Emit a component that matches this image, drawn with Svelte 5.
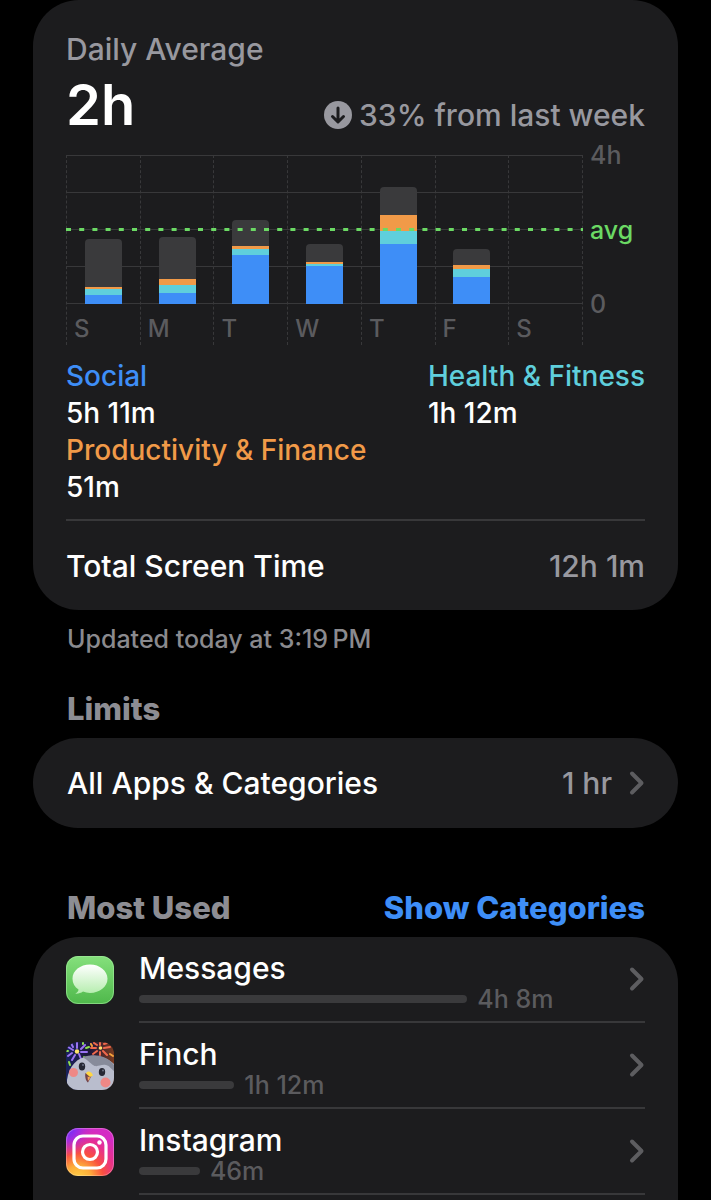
<script>
  const SCALE_MINUTES = 240;
  const AVERAGE_MINUTES = 120;

  const days = [
    { label: 'S', social: 14, health: 10, finance: 4, other: 76 },
    { label: 'M', social: 17, health: 14, finance: 9, other: 68 },
    { label: 'T', social: 79, health: 10, finance: 4, other: 42 },
    { label: 'W', social: 61, health: 4, finance: 2, other: 30 },
    { label: 'T', social: 97, health: 21, finance: 25, other: 46 },
    { label: 'F', social: 43, health: 13, finance: 7, other: 25 },
    { label: 'S', social: 0, health: 0, finance: 0, other: 0 }
  ];
  const stack = ['other', 'finance', 'health', 'social'];

  const categories = [
    { key: 'social', name: 'Social', time: '5h 11m' },
    { key: 'health', name: 'Health & Fitness', time: '1h 12m' },
    { key: 'finance', name: 'Productivity & Finance', time: '51m' }
  ];

  const apps = [
    { id: 'messages', name: 'Messages', minutes: 248, time: '4h 8m' },
    { id: 'finch', name: 'Finch', minutes: 72, time: '1h 12m' },
    { id: 'instagram', name: 'Instagram', minutes: 46, time: '46m' }
  ];
  const longest = Math.max(...apps.map((app) => app.minutes));

  const percent = (minutes) => (minutes / SCALE_MINUTES) * 100;
</script>

{#snippet chevron()}
  <svg class="chevron" viewBox="0 0 16 26" aria-hidden="true">
    <path d="M3 3.5 L12.5 13 L3 22.5" />
  </svg>
{/snippet}

{#snippet appIcon(id)}
  <svg class="app-icon" viewBox="0 0 48 48" aria-hidden="true">
    {#if id === 'messages'}
      <defs>
        <linearGradient id="msg-bg" x1="0" y1="0" x2="0" y2="1">
          <stop offset="0" stop-color="#85e07c" />
          <stop offset="1" stop-color="#4fb84b" />
        </linearGradient>
        <linearGradient id="msg-bubble" x1="0" y1="0" x2="0" y2="1">
          <stop offset="0" stop-color="#ffffff" />
          <stop offset="1" stop-color="#b5edae" />
        </linearGradient>
      </defs>
      <rect width="48" height="48" rx="12" fill="url(#msg-bg)" />
      <rect x="0.5" y="0.5" width="47" height="47" rx="11.5" fill="none" stroke="#a5eba0" stroke-opacity="0.6" />
      <path
        d="M24 8.5c-9.8 0-17.5 6.2-17.5 14.2 0 4.6 2.3 8.3 6 10.9 0 1.7-1.2 3.1-3.2 4.1 3 .2 5.7-.6 7.7-2.1 2.2.8 4.500 1.300 7 1.300 9.700 0 17.500-6.300 17.500-14.200S33.700 8.500 24 8.500z"
        fill="url(#msg-bubble)"
      />
    {:else if id === 'finch'}
      <defs>
        <clipPath id="finch-clip"><rect width="48" height="48" rx="12" /></clipPath>
        <linearGradient id="finch-sky" x1="0" y1="0" x2="1" y2="0">
          <stop offset="0" stop-color="#19225c" />
          <stop offset="0.5" stop-color="#1d1638" />
          <stop offset="1" stop-color="#7a3b20" />
        </linearGradient>
      </defs>
      <g clip-path="url(#finch-clip)">
        <rect width="48" height="48" fill="url(#finch-sky)" />
        <g fill="none" stroke-width="2" stroke-linecap="round">
          <path stroke="#9a74f2" d="M11 6V1M7 8L2 5M6 11L2 14M13 12l2 5M9 13l-3 5M15 7l4-4M15 10h6M7 5L5 1" />
          <path stroke="#8fe04f" d="M3 20l1 3M18 15l3 2M2 9H1M20 6l3-1M17 1v1" />
          <path stroke="#f0694d" d="M34 3V1M30 6h-5M31 9l-4 3M38 6l6-1M37 9l4 4M31 3l-3-2M38 2l3-1M34 10v3" />
          <path stroke="#f2a13c" d="M44 12l3 2M45 1l2 3M25 2l1 2" />
        </g>
        <circle cx="11" cy="9.5" r="2.2" fill="#ffe46b" />
        <circle cx="34.5" cy="6" r="1.8" fill="#ffdf70" />
        <path fill="#b9bdcd" d="M1 50V38C3 24 11 15 24 14c12-1 20 4 26 10v26z" />
        <path fill="#878b9a" d="M17 15.5c9-4 23-3 31 7.5v6c-3-2-4-5-8-6-6-1-9 3-13 0-3-2-5-5-10-7.5z" />
        <circle cx="7.5" cy="30.5" r="4.5" fill="#ee8886" />
        <circle cx="39.5" cy="40.5" r="5" fill="#ee8886" />
        <ellipse cx="16" cy="24.5" rx="3.2" ry="4" fill="#262834" />
        <ellipse cx="36" cy="30" rx="3.2" ry="4" fill="#262834" />
        <circle cx="17" cy="23" r="0.9" fill="#747a8c" />
        <circle cx="37" cy="28.5" r="0.9" fill="#747a8c" />
        <path fill="#71434a" d="M19.5 31l6.5 2-4 7.5c-2-1-3.500-6-2.500-9.500z" />
        <path fill="#f5a35b" d="M21.5 34.5l3 1-2.5 3.5z" />
        <path fill="#ffd743" d="M20 31.5c1-3.5 5.5-2.5 7 2l-3 1.5z" />
      </g>
    {:else}
      <defs>
        <radialGradient id="ig-warm" cx="0.25" cy="1.05" r="1.05">
          <stop offset="0" stop-color="#ffcf45" />
          <stop offset="0.25" stop-color="#fdae3a" />
          <stop offset="0.5" stop-color="#f9503f" />
          <stop offset="0.75" stop-color="#e8308c" />
          <stop offset="1" stop-color="#d42bc4" />
        </radialGradient>
        <radialGradient id="ig-cool" cx="0" cy="0" r="0.6">
          <stop offset="0" stop-color="#5a30ff" />
          <stop offset="0.4" stop-color="#8b2cf5" stop-opacity="0.8" />
          <stop offset="1" stop-color="#c22bd8" stop-opacity="0" />
        </radialGradient>
      </defs>
      <rect width="48" height="48" rx="12" fill="url(#ig-warm)" />
      <rect width="48" height="48" rx="12" fill="url(#ig-cool)" />
      <rect x="0.5" y="0.5" width="47" height="47" rx="11.5" fill="none" stroke="#ffffff" stroke-opacity="0.25" />
      <rect x="8" y="8" width="32" height="32" rx="9" fill="none" stroke="#ffffff" stroke-width="3.2" />
      <circle cx="24" cy="24" r="7.5" fill="none" stroke="#ffffff" stroke-width="3.2" />
      <circle cx="33.5" cy="14.5" r="2.2" fill="#ffffff" />
    {/if}
  </svg>
{/snippet}

<main>
  <section class="card summary">
    <h2 class="caption">Daily Average</h2>
    <div class="headline">
      <strong>2h</strong>
      <p class="trend">
        <svg viewBox="0 0 28 28" aria-hidden="true">
          <circle cx="14" cy="14" r="14" />
          <path d="M14 7V20.5M8.5 15.5L14 21L19.5 15.5" />
        </svg>
        33% from last week
      </p>
    </div>

    <div class="chart">
      <div class="plot">
        <div class="days">
          {#each days as day}
            <div class="day">
              <div class="bar-area">
                <div class="bar">
                  {#each stack as key}
                    <div class="segment {key}" style="height: {percent(day[key])}%"></div>
                  {/each}
                </div>
              </div>
              <span class="day-label">{day.label}</span>
            </div>
          {/each}
        </div>
        <div class="overlay">
          <svg class="average" style="top: {100 - percent(AVERAGE_MINUTES)}%" aria-hidden="true">
            <line x1="0" y1="1.5" x2="100%" y2="1.5" />
          </svg>
        </div>
      </div>
      <div class="scale">
        <span>4h</span>
        <span class="avg">avg</span>
        <span>0</span>
      </div>
    </div>

    <dl class="legend">
      {#each categories as category}
        <div>
          <dt class={category.key}>{category.name}</dt>
          <dd>{category.time}</dd>
        </div>
      {/each}
    </dl>

    <div class="total">
      <span>Total Screen Time</span>
      <span class="value">12h 1m</span>
    </div>
  </section>
  <p class="updated">Updated today at 3:19&#8239;PM</p>

  <div class="section-head">
    <h2>Limits</h2>
  </div>
  <a class="card limit" href="#limits">
    <span>All Apps &amp; Categories</span>
    <span class="value">1 hr</span>
    {@render chevron()}
  </a>

  <div class="section-head most-used">
    <h2>Most Used</h2>
    <button type="button">Show Categories</button>
  </div>
  <section class="card apps">
    {#each apps as app}
      <a class="app" href="#{app.id}">
        {@render appIcon(app.id)}
        <div class="app-body">
          <div class="usage">
            <span class="app-name">{app.name}</span>
            <div class="meter">
              <div class="track" style="width: {(app.minutes / longest) * 67}%"></div>
              <span>{app.time}</span>
            </div>
          </div>
          {@render chevron()}
        </div>
      </a>
    {/each}
  </section>
</main>

<style>
  :global(body) {
    margin: 0;
    background-color: #000000;
  }

  main {
    --blue: #3e8ef7;
    --teal: #5fcfdc;
    --orange: #f19a48;
    --green: #6bd964;
    --muted: #98989f;
    --dim: #5b5b5e;
    --line: #38383a;
    display: flex;
    flex-direction: column;
    box-sizing: border-box;
    min-height: 100vh;
    padding: 0 33px;
    color: #ffffff;
    font-family: Inter, "Liberation Sans", sans-serif;
    font-size: 30px;
    font-weight: 500;
    line-height: 36px;
  }

  h2, p, dl, dd {
    margin: 0;
  }

  a {
    color: inherit;
    text-decoration: none;
  }

  .card {
    background-color: #1c1c1e;
    border-radius: 46px;
  }

  .summary {
    padding: 31px 33px 0;
  }

  .caption {
    color: var(--muted);
    font-size: 30px;
    font-weight: 500;
  }

  .headline {
    display: flex;
    justify-content: space-between;
    align-items: flex-end;
  }

  .headline strong {
    padding-top: 4px;
    font-size: 56px;
    font-weight: 600;
    line-height: 68px;
  }

  .trend {
    display: flex;
    align-items: center;
    gap: 7px;
    padding-bottom: 6px;
    color: var(--muted);
  }

  .trend svg {
    width: 28px;
    height: 28px;
    fill: var(--muted);
  }

  .trend path {
    fill: none;
    stroke: #1c1c1e;
    stroke-width: 3;
    stroke-linecap: round;
    stroke-linejoin: round;
  }

  .chart {
    display: flex;
    gap: 7px;
    margin-top: 16px;
  }

  .plot {
    position: relative;
    flex: 1;
  }

  .days {
    display: flex;
    background: repeating-linear-gradient(to bottom, var(--line) 0 1px, transparent 1px 37px) top / 100% 149px no-repeat;
    border-right: 1px dashed var(--line);
  }

  .day {
    flex: 1;
    border-left: 1px dashed var(--line);
  }

  .bar-area {
    display: flex;
    justify-content: center;
    align-items: flex-end;
    height: 149px;
  }

  .bar {
    display: flex;
    flex-direction: column;
    justify-content: flex-end;
    width: 51%;
    height: 100%;
  }

  .segment.other {
    background-color: #3a3a3c;
    border-radius: 4px 4px 0 0;
  }

  .segment.finance {
    background-color: var(--orange);
  }

  .segment.health {
    background-color: var(--teal);
  }

  .segment.social {
    background-color: var(--blue);
  }

  .day-label {
    display: block;
    padding: 9px 0 0 7px;
    color: var(--dim);
    font-size: 24px;
    line-height: 32px;
  }

  .overlay {
    position: absolute;
    top: 0;
    left: 0;
    width: 100%;
    height: 149px;
  }

  .average {
    position: absolute;
    left: 0;
    width: 100%;
    height: 3px;
    margin-top: -2px;
  }

  .average line {
    stroke: var(--green);
    stroke-width: 3;
    stroke-dasharray: 5 8.2;
  }

  .scale {
    display: flex;
    flex-direction: column;
    justify-content: space-between;
    width: 55px;
    height: 181px;
    margin-top: -16px;
    color: var(--dim);
    font-size: 25px;
    line-height: 32px;
  }

  .scale .avg {
    color: var(--green);
  }

  .legend {
    display: grid;
    grid-template-columns: 1fr auto;
    margin-top: 13px;
    font-size: 28px;
    line-height: 37px;
  }

  dt.social {
    color: var(--blue);
  }

  dt.health {
    color: var(--teal);
  }

  dt.finance {
    color: var(--orange);
  }

  .total {
    display: flex;
    justify-content: space-between;
    margin-top: 13px;
    padding: 27px 0 26px;
    border-top: 2px solid var(--line);
  }

  .value {
    color: var(--muted);
  }

  .updated {
    padding: 13px 34px 0;
    color: #8a8a8e;
    font-size: 25px;
    line-height: 32px;
  }

  .section-head {
    display: flex;
    justify-content: space-between;
    padding: 36px 33px 11px 34px;
  }

  .section-head.most-used {
    padding-top: 62px;
  }

  .section-head h2 {
    color: #8d8d93;
    font-size: 31px;
    font-weight: 800;
  }

  .section-head button {
    padding: 0;
    border: 0;
    background: none;
    color: var(--blue);
    font: inherit;
    font-size: 31px;
    font-weight: 800;
    cursor: pointer;
  }

  .limit {
    display: flex;
    align-items: center;
    padding: 27px 33px 27px 34px;
  }

  .limit .value {
    margin-left: auto;
    padding-right: 17px;
  }

  .chevron {
    flex: none;
    width: 16px;
    height: 26px;
    fill: none;
    stroke: #5d5d60;
    stroke-width: 4;
    stroke-linecap: round;
    stroke-linejoin: round;
  }

  .apps {
    flex: 1;
    padding: 0 33px;
    border-radius: 46px 46px 0 0;
  }

  .app {
    display: flex;
    align-items: center;
    gap: 25px;
  }

  .app-icon {
    flex: none;
    width: 48px;
    height: 48px;
  }

  .app-body {
    display: flex;
    flex: 1;
    align-items: center;
    height: 84px;
    border-bottom: 2px solid var(--line);
  }

  .usage {
    flex: 1;
    padding-top: 6px;
  }

  .app-name {
    display: block;
    line-height: 34px;
  }

  .meter {
    display: flex;
    align-items: center;
    gap: 10px;
    color: var(--dim);
    font-size: 25px;
    line-height: 28px;
  }

  .track {
    height: 8px;
    border-radius: 4px;
    background-color: #3a3a3c;
  }
</style>
